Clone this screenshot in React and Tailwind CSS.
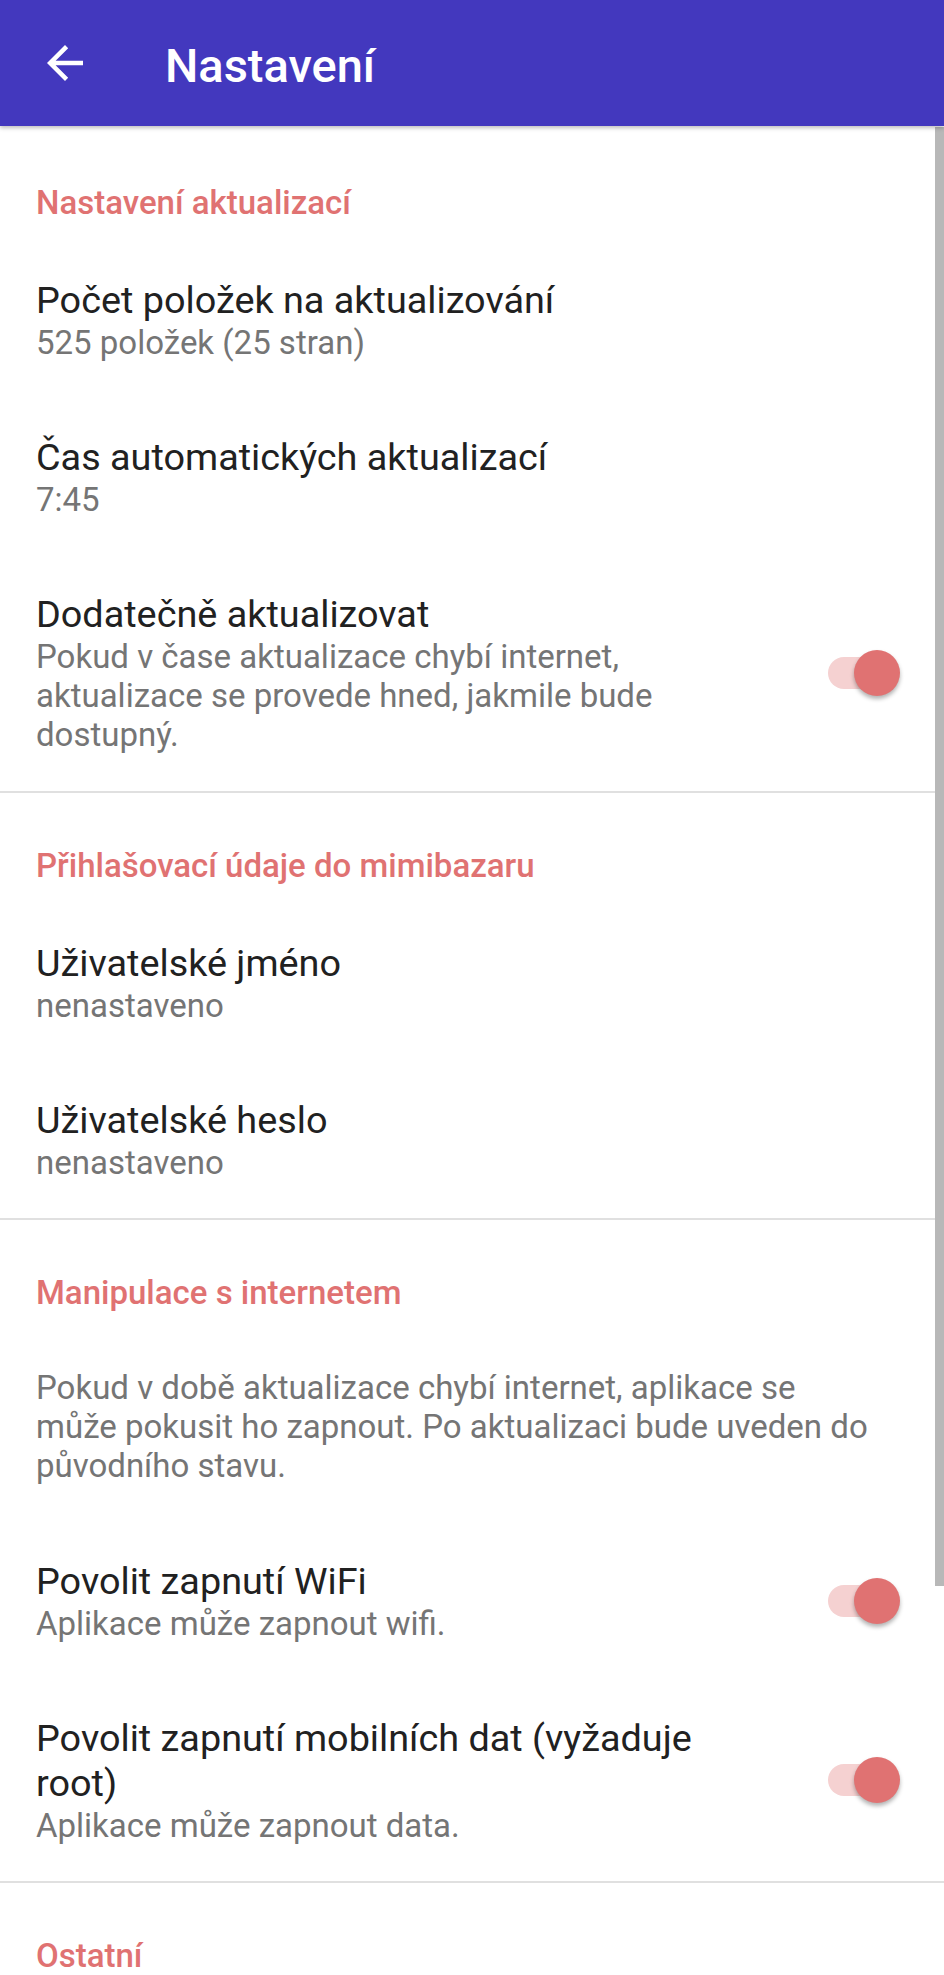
import React from 'react';

const ACCENT = 'text-[#E07272]';

const sections = [
  {
    title: 'Nastavení aktualizací',
    pt: 'pt-[57px]',
    items: [
      { title: 'Počet položek na aktualizování', summary: '525 položek (25 stran)' },
      { title: 'Čas automatických aktualizací', summary: '7:45' },
      {
        title: 'Dodatečně aktualizovat',
        summary: 'Pokud v čase aktualizace chybí internet, aktualizace se provede hned, jakmile bude dostupný.',
        toggle: true,
      },
    ],
  },
  {
    title: 'Přihlašovací údaje do mimibazaru',
    pt: 'pt-[53px]',
    items: [
      { title: 'Uživatelské jméno', summary: 'nenastaveno' },
      { title: 'Uživatelské heslo', summary: 'nenastaveno' },
    ],
  },
  {
    title: 'Manipulace s internetem',
    pt: 'pt-[53px]',
    items: [
      {
        summary: 'Pokud v době aktualizace chybí internet, aplikace se může pokusit ho zapnout. Po aktualizaci bude uveden do původního stavu.',
        wide: true,
      },
      { title: 'Povolit zapnutí WiFi', summary: 'Aplikace může zapnout wifi.', toggle: true },
      {
        title: 'Povolit zapnutí mobilních dat (vyžaduje root)',
        summary: 'Aplikace může zapnout data.',
        toggle: true,
      },
    ],
  },
  {
    title: 'Ostatní',
    pt: 'pt-[53px]',
    items: [],
  },
];

const Toggle = () => (
  <div className="relative w-[72px] h-[46px] shrink-0">
    <div className="absolute left-0 top-[7px] w-[65px] h-[32px] rounded-full bg-[#F5D1D1]" />
    <div className="absolute right-0 top-0 w-[46px] h-[46px] rounded-full bg-[#E07272] shadow-[0_3px_4px_rgba(0,0,0,0.3)]" />
  </div>
);

const Pref = ({ title, summary, toggle, wide }) => (
  <div className={`flex items-center justify-between pl-[36px] py-[36.5px] ${wide ? 'pr-[60px]' : 'pr-[44px]'}`}>
    <div className={wide ? 'flex-1 min-w-0' : 'w-[664px]'}>
      {title && <div className="text-[37.8px] leading-[45px] text-[#212121]">{title}</div>}
      {summary && <div className="text-[33px] leading-[39.2px] text-[#757575]">{summary}</div>}
    </div>
    {toggle && <Toggle />}
  </div>
);

export default function App() {
  return (
    <div className="relative w-[944px] h-[1975px] overflow-hidden bg-white font-['Roboto',sans-serif]">
      <div className="relative z-10 h-[126px] bg-[#4338BE] flex items-center shadow-[0_2px_4px_rgba(0,0,0,0.25)]">
        <div className="w-[54px] h-[54px] ml-[38px] flex items-center justify-center">
          <svg viewBox="0 0 24 24" width="54" height="54" fill="white">
            <path d="M20 11H7.83l5.59-5.59L12 4l-8 8 8 8 1.41-1.41L7.83 13H20v-2z" />
          </svg>
        </div>
        <h1 className="ml-[73px] pt-[4px] text-[47px] font-medium text-white leading-none">Nastavení</h1>
      </div>

      {sections.map((s, i) => (
        <div key={s.title}>
          {i > 0 && <div className="h-[2px] bg-[#E0E0E0]" />}
          <div className={`pl-[36px] ${s.pt} pb-[19px] text-[33px] leading-[39px] font-medium ${ACCENT}`}>
            {s.title}
          </div>
          {s.items.map((it, j) => (
            <Pref key={j} {...it} />
          ))}
        </div>
      ))}

      <div className="absolute right-0 top-[127px] w-[9px] h-[1459px] bg-[#B8B8B8]" />
    </div>
  );
}
